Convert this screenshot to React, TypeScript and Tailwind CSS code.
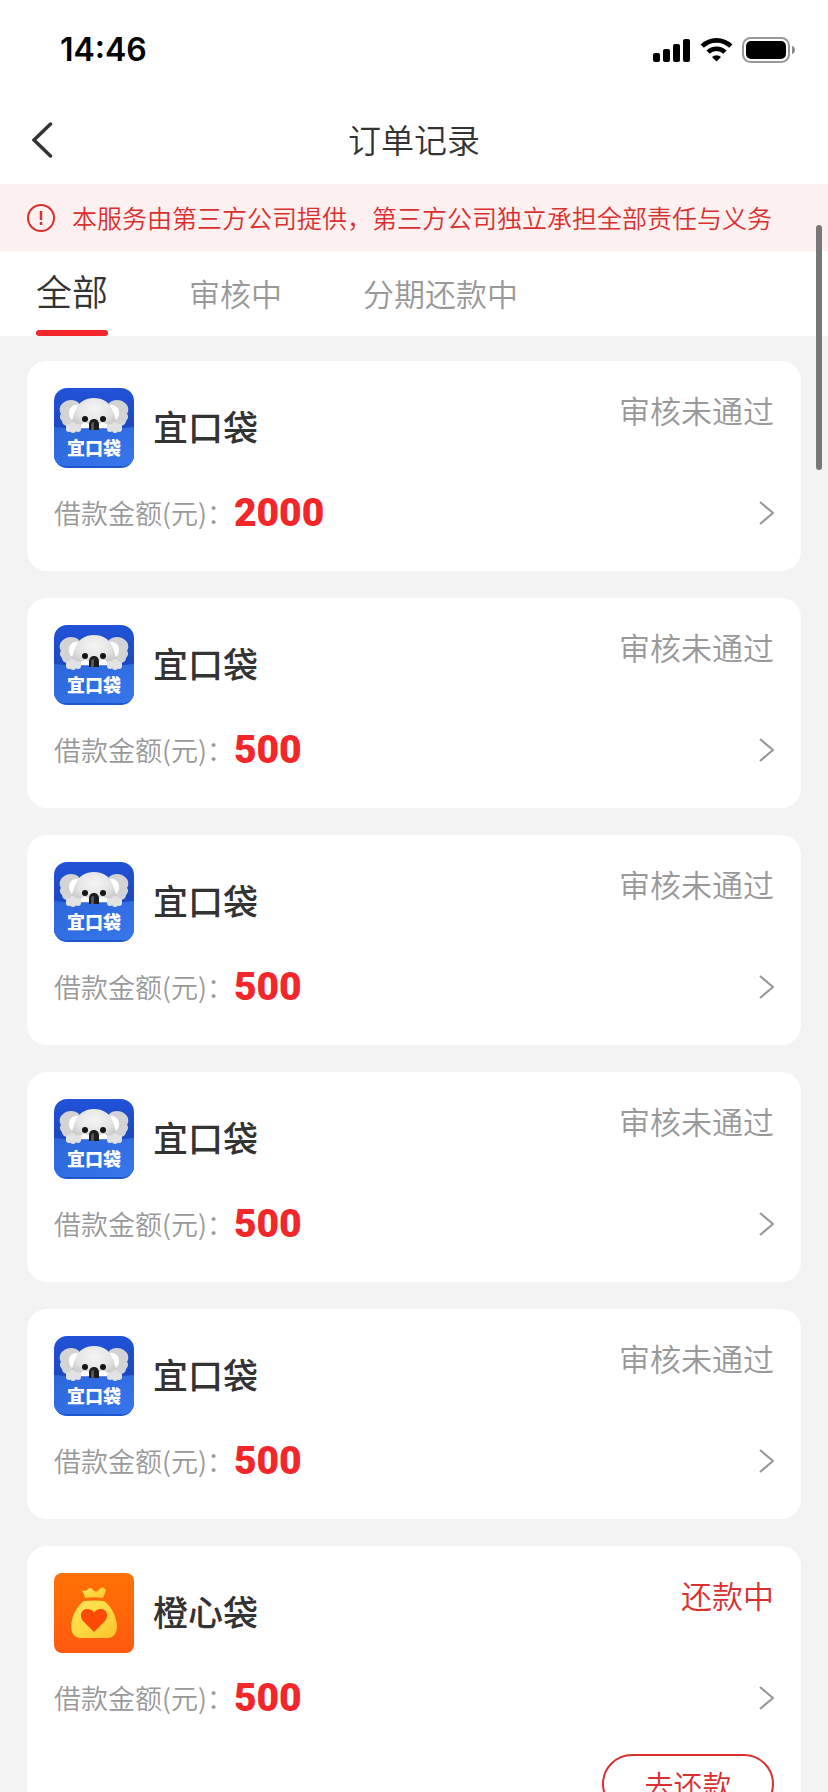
import { useState } from "react";

type Order = {
	id: number;
	brand: "koala" | "orange";
	name: string;
	amount: number;
	status: string;
	active?: boolean;
};

const tabs = ["全部", "审核中", "分期还款中"];

const orders: Order[] = [
	{ id: 1, brand: "koala", name: "宜口袋", amount: 2000, status: "审核未通过" },
	{ id: 2, brand: "koala", name: "宜口袋", amount: 500, status: "审核未通过" },
	{ id: 3, brand: "koala", name: "宜口袋", amount: 500, status: "审核未通过" },
	{ id: 4, brand: "koala", name: "宜口袋", amount: 500, status: "审核未通过" },
	{ id: 5, brand: "koala", name: "宜口袋", amount: 500, status: "审核未通过" },
	{ id: 6, brand: "orange", name: "橙心袋", amount: 500, status: "还款中", active: true },
];

function StatusBar() {
	return (
		<div className="flex h-[99px] items-center justify-between pl-[60px] pr-8">
			<span className="font-['Inter'] text-[32px] font-semibold leading-none text-black">
				14:46
			</span>
			<div className="flex items-center gap-[9px]">
				<svg width="38" height="24" viewBox="0 0 38 24" fill="#000">
					<rect x="0" y="15" width="7" height="9" rx="2" />
					<rect x="10" y="11" width="7" height="13" rx="2" />
					<rect x="20" y="6" width="7" height="18" rx="2" />
					<rect x="30" y="1" width="7" height="23" rx="2" />
				</svg>
				<svg width="33" height="24" viewBox="0 0 33 24" fill="none" stroke="#000" strokeWidth="4.6">
					<path d="M2.2 8.2a20.4 20.4 0 0 1 28.6 0" />
					<path d="M8 14.2a12.2 12.2 0 0 1 17 0" />
					<path d="M12 19a6.4 6.4 0 0 1 9 0L16.5 23.6z" fill="#000" stroke="none" />
				</svg>
				<svg width="54" height="26" viewBox="0 0 54 26">
					<rect x="1" y="1" width="46" height="24" rx="7.5" fill="none" stroke="#999" strokeWidth="2" />
					<rect x="4" y="4" width="40" height="18" rx="5" fill="#000" />
					<path d="M50 9c4 1 4 7 0 8z" fill="#888" />
				</svg>
			</div>
		</div>
	);
}

function KoalaIcon() {
	return (
		<svg className="size-20" viewBox="0 0 80 80">
			<defs>
				<linearGradient id="sky" x1="0" y1="0" x2="0" y2="1">
					<stop offset="0" stopColor="#2152d8" />
					<stop offset="1" stopColor="#1c47bd" />
				</linearGradient>
				<linearGradient id="pocket" x1="0" y1="0" x2="1" y2="1">
					<stop offset="0" stopColor="#2c66da" />
					<stop offset="1" stopColor="#3776ec" />
				</linearGradient>
				<radialGradient id="fur" cx="0.5" cy="0.35" r="0.65">
					<stop offset="0" stopColor="#f5f5f5" />
					<stop offset="0.6" stopColor="#e4e4e4" />
					<stop offset="1" stopColor="#c6c6c8" />
				</radialGradient>
				<clipPath id="tile">
					<rect width="80" height="80" rx="13" />
				</clipPath>
			</defs>
			<g clipPath="url(#tile)">
				<rect width="80" height="44" fill="url(#sky)" />
				<path d="M25 15c-4-4-12-4-16 0-4 3-4 8-2 11-2 2-1 5 1 7 0 3 3 5 6 5h14z" fill="#d3d3d5" />
				<path d="M55 15c4-4 12-4 16 0 4 3 4 8 2 11 2 2 1 5-1 7 0 3-3 5-6 5H52z" fill="#d3d3d5" />
				<path d="M24 17c-5-1-9 3-9 8s3 8 7 8z" fill="#fff" />
				<path d="M56 17c5-1 9 3 9 8s-3 8-7 8z" fill="#fff" />
				<path d="M18 33c1-4 2-8 4-12 3-7 9-11 18-11s15 4 18 11c2 4 3 8 4 12 0 5-2 8-5 8H23c-3 0-5-3-5-8z" fill="url(#fur)" />
				<ellipse cx="31" cy="39" rx="5" ry="4" fill="#fff" />
				<ellipse cx="49" cy="39" rx="5" ry="4" fill="#fff" />
				<circle cx="31" cy="31" r="3" fill="#151515" />
				<circle cx="49" cy="31" r="3" fill="#151515" />
				<path d="M0 39c14 2 66 2 80 0v41H0z" fill="#1d57cd" />
				<path d="M0 39c14 2 66 2 80 0v32c-3 5-6 7-11 7H11c-5 0-8-2-11-7z" fill="url(#pocket)" />
				<path d="M35 42v-5c0-4 2-6 5-6s5 2 5 6v5z" fill="#1c1b1e" />
				<path d="M37 42v-5c0-2 1-3 3-3v8z" fill="#55555a" />
				<g fill="#e2e2e2">
					<rect x="12" y="36" width="6" height="8" rx="3" />
					<rect x="16" y="34" width="6" height="11" rx="3" />
					<rect x="21" y="36" width="6" height="8" rx="3" />
					<rect x="53" y="36" width="6" height="8" rx="3" />
					<rect x="58" y="34" width="6" height="11" rx="3" />
					<rect x="62" y="36" width="6" height="8" rx="3" />
				</g>
				<text
					x="40"
					y="67"
					textAnchor="middle"
					fill="#fff"
					fontSize="18"
					fontWeight="900"
					fontFamily="Noto Sans CJK SC, sans-serif"
				>
					宜口袋
				</text>
			</g>
		</svg>
	);
}

function OrangeIcon() {
	return (
		<svg className="size-20" viewBox="0 0 80 80">
			<defs>
				<linearGradient id="orange" x1="0" y1="0" x2="0" y2="1">
					<stop offset="0" stopColor="#ff7204" />
					<stop offset="1" stopColor="#ff5a10" />
				</linearGradient>
				<linearGradient id="gold" x1="0" y1="0" x2="1" y2="1">
					<stop offset="0" stopColor="#ffe45e" />
					<stop offset="0.5" stopColor="#ffd93f" />
					<stop offset="1" stopColor="#ffc22e" />
				</linearGradient>
			</defs>
			<rect width="80" height="80" rx="8" fill="url(#orange)" />
			<path d="M31 25l-1-4-2-3c2-1 4 1 6-2 2-2 4-1 5 1 2 2 4 2 6 0 1-2 3-3 5-2 2 1 2 3 1 5l-2 5c-6-1-12-1-18 0z" fill="url(#gold)" />
			<path d="M30 28q10-1 20 0c7 5 12 14 13 25 0 8-4 12-10 12H27c-6 0-10-4-10-12 1-11 6-20 13-25z" fill="url(#gold)" />
			<path d="M40 59L29 48c-4-5-2-12 4-12 3 0 6 1 7 4 1-3 4-4 7-4 6 0 8 7 4 12z" fill="#ff4a05" />
		</svg>
	);
}

function OrderCard({ order }: { order: Order }) {
	return (
		<article className="min-h-[210px] shrink-0 rounded-[20px] bg-white p-[27px]">
			<div className="flex h-20 items-start">
				{order.brand === "koala" ? <KoalaIcon /> : <OrangeIcon />}
				<h2 className="ml-[19px] text-[35px] font-medium leading-[76px] text-[#333]">{order.name}</h2>
				<span
					className={`ml-auto text-[31px] leading-[43px] ${order.active ? "text-[#d9302f]" : "text-[#999]"}`}
				>
					{order.status}
				</span>
			</div>
			<a href="#detail" className="mt-[21px] flex h-12 items-center">
				<span className="text-[27px] text-[#999]">借款金额(元)：</span>
				<span className="font-['Roboto'] text-[39px] font-black leading-none text-[#f32629]">
					{order.amount}
				</span>
				<svg className="ml-auto" width="15" height="24" viewBox="0 0 15 24" fill="none" stroke="#999" strokeWidth="2.2">
					<path d="M1 1l13 11L1 23" />
				</svg>
			</a>
			{order.active && (
				<div className="mt-8 flex justify-end">
					<button
						type="button"
						className="h-[60px] w-[172px] rounded-full border-2 border-[#d9302f] text-[29px] leading-none text-[#d9302f]"
					>
						去还款
					</button>
				</div>
			)}
		</article>
	);
}

export default function App() {
	const [current, setCurrent] = useState("全部");

	return (
		<div className="relative flex h-screen flex-col overflow-hidden bg-[#f3f3f3] font-['Noto_Sans_CJK_SC',sans-serif] font-[350]">
			<header className="shrink-0 bg-white">
				<StatusBar />
				<div className="grid h-[85px] grid-cols-[1fr_auto_1fr] items-center px-8 pb-1">
					<button type="button" aria-label="返回" className="justify-self-start">
						<svg width="21" height="36" viewBox="0 0 21 36" fill="none" stroke="#333" strokeWidth="3.5" strokeLinecap="round">
							<path d="M18.5 2L2 18l16.5 16" />
						</svg>
					</button>
					<h1 className="text-[33px] leading-none text-[#333]">订单记录</h1>
				</div>
			</header>

			<div className="flex h-[67px] shrink-0 items-center bg-[#fdf0f0] pl-[27px] text-[#d9302f]">
				<svg width="28" height="28" viewBox="0 0 28 28" fill="none" stroke="currentColor" strokeWidth="2">
					<circle cx="14" cy="14" r="13" />
					<path d="M14 7v9M14 18v3" strokeWidth="2.5" />
				</svg>
				<p className="ml-[17px] whitespace-nowrap text-[25px]">
					本服务由第三方公司提供，第三方公司独立承担全部责任与义务
				</p>
			</div>

			<nav className="flex h-[85px] shrink-0 gap-[81px] bg-white pl-9">
				{tabs.map((tab) => (
					<button
						type="button"
						key={tab}
						onClick={() => setCurrent(tab)}
						className={`flex flex-col justify-between ${
							tab === current
								? "text-[36px] leading-[79px] text-[#333]"
								: "text-[31px] leading-[83px] text-[#999]"
						}`}
					>
						<span>{tab}</span>
						{tab === current && <span className="h-[6px] w-full shrink-0 rounded-full bg-[#f32629]" />}
					</button>
				))}
			</nav>

			<main className="flex flex-col gap-[27px] px-[27px] pt-[25px]">
				{orders.map((order) => (
					<OrderCard key={order.id} order={order} />
				))}
			</main>

			{/* scroll indicator */}
			<div className="absolute right-[6px] top-[225px] h-[245px] w-[6px] rounded-full bg-[#777]" />
		</div>
	);
}
